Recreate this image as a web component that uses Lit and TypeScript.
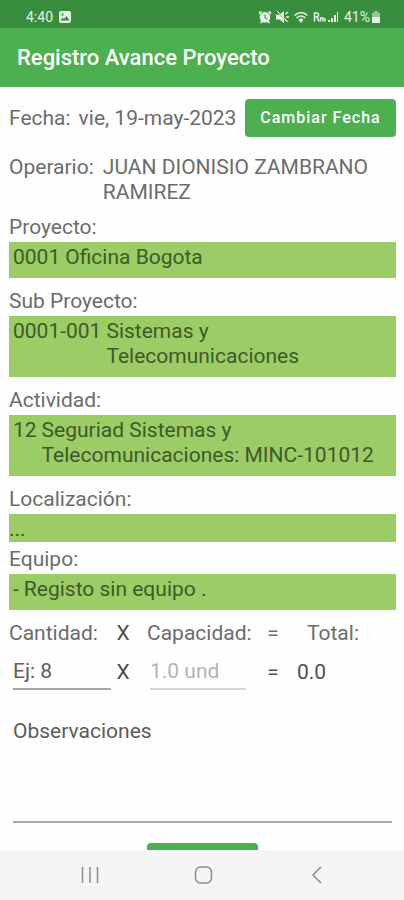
import { LitElement, html, css, svg } from "lit";
import { customElement, property } from "lit/decorators.js";

@customElement("status-bar")
class StatusBar extends LitElement {
  static styles = css`
    :host {
      display: flex;
      align-items: center;
      justify-content: space-between;
      height: 28px;
      padding: 6px 24px 0 26px;
      box-sizing: border-box;
      background: #388e3c;
      color: #e6f3e4;
      font: 14px/20px Roboto, sans-serif;
    }
    .group {
      display: flex;
      align-items: center;
      gap: 5px;
    }
    .tight {
      gap: 2px;
    }
    svg {
      display: block;
      fill: currentColor;
    }
    .line {
      fill: none;
      stroke: currentColor;
    }
  `;

  render() {
    return html`
      <div class="group">
        <span>4:40</span>
        <svg width="14" height="14" viewBox="0 0 14 14">
          <path fill-rule="evenodd" d="M3 1h8a2 2 0 0 1 2 2v8a2 2 0 0 1-2 2H3a2 2 0 0 1-2-2V3a2 2 0 0 1 2-2zM2.500 10.500h9L8.500 6 6 9 4.500 7.500zM3.500 3.500v2h2v-2z" />
        </svg>
      </div>
      <div class="group">
        <svg width="12" height="14" viewBox="0 0 12 14">
          <path fill-rule="evenodd" d="M6 2a5 5 0 1 1 0 10.500A5 5 0 0 1 6 2zM5.500 4.500v3.500l2.500 1.500.5-1-2-1v-3z" />
          <path d="M0 5V1.500h3.500zM12 5V1.500H8.500zM1 13.500l1-3 2 2zM11 13.500l-1-3-2 2z" />
        </svg>
        <svg width="13" height="14" viewBox="0 0 13 14">
          <path d="M0 4.500h3.500L8 1v12L3.500 9.500H0z" />
          <path d="M0 1l12 11" stroke="#388e3c" stroke-width="1" />
          <path class="line" d="M1 1l11 11" />
          <path class="line" stroke-width="1.500" d="M9.500 4l2.500-2M10 7h3M9.500 10l1 1" />
        </svg>
        <svg width="14" height="14" viewBox="0 0 14 14">
          <path class="line" stroke-width="1.500" d="M.5 5.500q6.500-6 13 0M2.500 8q4.500-4 9 0" />
          <path d="M7 13L4.500 9.500q2.500-2 5 0z" />
        </svg>
        <div class="group tight">
          <svg width="13" height="14" viewBox="0 0 13 14">
            <path class="line" stroke-width="1.500" d="M1.500 2.500v9M1.500 3h2q2 0 2 2t-2 2h-2M4 7l2 4.500M7.500 11.500V8h2.500v3.500M12 8v3.500" />
          </svg>
          <svg width="11" height="14" viewBox="0 0 11 14">
            <path d="M0 10h2v2H0zM3 8h2v4H3zM6 5h2v7H6zM9 2h1v10H9z" />
          </svg>
        </div>
        <div class="group tight">
          <span>41%</span>
          <svg width="8" height="14" viewBox="0 0 8 14">
            <path d="M2.500 1h3v1.500H7a1 1 0 0 1 1 1V12a1 1 0 0 1-1 1H1a1 1 0 0 1-1-1V3.500a1 1 0 0 1 1-1h1.500z" opacity=".55" />
            <path d="M0 7h8v5a1 1 0 0 1-1 1H1a1 1 0 0 1-1-1z" />
          </svg>
        </div>
      </div>
    `;
  }
}

@customElement("picker-field")
class PickerField extends LitElement {
  @property() label = "";
  @property() code = "";
  @property() value = "";

  static styles = css`
    :host {
      display: block;
      font: 21px/25px Roboto, sans-serif;
      color: #6c6c6c;
    }
    .label {
      margin-bottom: 2px;
    }
    .box {
      display: flex;
      gap: 5px;
      width: 100%;
      box-sizing: border-box;
      padding: 3px 4px 8px;
      border: 0;
      background: #9ccc65;
      color: #40592a;
      font: inherit;
      text-align: left;
    }
    .code {
      white-space: nowrap;
    }
    .empty {
      padding: 3px 0 0;
    }
  `;

  render() {
    return html`
      <div class="label" id="label">${this.label}</div>
      <button class="box ${this.code ? "" : "empty"}" type="button" aria-labelledby="label value">
        ${this.code ? html`<span class="code">${this.code}</span>` : null}
        <span id="value">${this.value}</span>
      </button>
    `;
  }
}

@customElement("nav-bar")
class NavBar extends LitElement {
  static styles = css`
    :host {
      display: flex;
      justify-content: center;
      align-items: center;
      gap: 88px;
      height: 50px;
      flex: none;
      padding-left: 3px;
      background: #f5f5f5;
    }
    button {
      display: flex;
      padding: 0;
      border: 0;
      background: none;
      color: #8c8c8c;
    }
    svg {
      fill: none;
      stroke: currentColor;
      stroke-width: 1.500;
    }
  `;

  private key(name: string, shape: unknown) {
    return html`<button type="button" aria-label=${name}>
      <svg width="25" height="20" viewBox="0 0 25 20">${shape}</svg>
    </button>`;
  }

  render() {
    return html`
      ${this.key("Recientes", svg`<path d="M4.500 2v16M12 2v16M19.500 2v16" />`)}
      ${this.key("Inicio", svg`<rect x="4.500" y="2" width="16" height="16" rx="5" />`)}
      ${this.key("Atrás", svg`<path d="M17 2L9 10l8 8" />`)}
    `;
  }
}

@customElement("app-root")
class AppRoot extends LitElement {
  static styles = css`
    :host {
      display: flex;
      flex-direction: column;
      height: 100vh;
      background: #fefefe;
      color: #6c6c6c;
      font: 21px/25px Roboto, sans-serif;
    }
    .bar {
      flex: none;
      padding: 17px;
      background: #4caf50;
      color: #fff;
    }
    .title {
      margin: 0;
      font-size: 22px;
      line-height: 25px;
      font-weight: 500;
    }
    .content {
      flex: 1;
      min-height: 0;
      overflow: hidden;
      padding: 12px 8px 0 9px;
    }
    .date,
    .worker {
      display: flex;
      gap: 9px;
    }
    .date {
      align-items: center;
      margin-bottom: 18px;
      white-space: nowrap;
    }
    .worker {
      margin-bottom: 10px;
    }
    .action {
      border: 0;
      border-radius: 4px;
      background: #4caf50;
      color: #fff;
      height: 38px;
      font: 500 16px/20px Roboto, sans-serif;
      letter-spacing: 1px;
    }
    .change {
      flex: none;
      width: 151px;
      padding: 0;
      margin-left: auto;
    }
    .date {
      gap: 8px;
    }
    .fields {
      display: flex;
      flex-direction: column;
      gap: 11px;
    }
    .near {
      margin-top: -6px;
    }
    .amounts {
      display: grid;
      grid-template-columns: 104fr 20fr 124fr 32fr 107fr;
      align-items: center;
      row-gap: 8px;
      margin-top: 11px;
    }
    .sign {
      text-align: center;
    }
    .dark {
      color: #4e4e4e;
    }
    .capacity {
      padding-left: 14px;
    }
    .total {
      padding-left: 18px;
    }
    .result {
      padding-left: 8px;
    }
    input,
    textarea {
      display: block;
      box-sizing: border-box;
      border: 0;
      border-bottom: 2px solid #a8a8a8;
      border-radius: 0;
      padding: 0;
      background: none;
      color: #4e4e4e;
      font: inherit;
      outline: 0;
    }
    input {
      height: 36px;
      min-width: 0;
      margin: 0 2px 0 4px;
    }
    .capacity-input {
      margin: 0 11px 0 17px;
      border-color: #d4d4d4;
    }
    ::placeholder {
      color: #5c5c5c;
      opacity: 1;
    }
    .capacity-input::placeholder {
      color: #b4b4b4;
    }
    .notes {
      width: calc(100% - 8px);
      height: 104px;
      margin: 29px 4px 20px;
      resize: none;
    }
    .save {
      display: block;
      width: 111px;
      margin: 0 auto;
    }
  `;

  render() {
    return html`
      <status-bar></status-bar>
      <header class="bar"><h1 class="title">Registro Avance Proyecto</h1></header>
      <main class="content">
        <div class="date">
          <span>Fecha:</span>
          <span>vie, 19-may-2023</span>
          <button class="action change" type="button">Cambiar Fecha</button>
        </div>
        <div class="worker">
          <span>Operario:</span>
          <span>JUAN DIONISIO ZAMBRANO RAMIREZ</span>
        </div>
        <div class="fields">
          <picker-field label="Proyecto:" code="0001" value="Oficina Bogota"></picker-field>
          <picker-field label="Sub Proyecto:" code="0001-001" value="Sistemas y Telecomunicaciones"></picker-field>
          <picker-field label="Actividad:" code="12" value="Seguriad Sistemas y Telecomunicaciones: MINC-101012"></picker-field>
          <picker-field label="Localización:" value="..."></picker-field>
          <picker-field class="near" label="Equipo:" code="-" value="Registo sin equipo ."></picker-field>
        </div>
        <div class="amounts">
          <label for="quantity">Cantidad:</label>
          <span class="sign dark">X</span>
          <label class="capacity" for="capacity">Capacidad:</label>
          <span class="sign">=</span>
          <label class="total" for="total">Total:</label>
          <input id="quantity" inputmode="decimal" placeholder="Ej: 8" />
          <span class="sign dark">X</span>
          <input class="capacity-input" id="capacity" placeholder="1.0 und" disabled />
          <span class="sign dark">=</span>
          <output class="result dark" id="total">0.0</output>
        </div>
        <textarea class="notes" placeholder="Observaciones" aria-label="Observaciones"></textarea>
        <button class="action save" type="button" aria-label="Guardar"></button>
      </main>
      <nav-bar></nav-bar>
    `;
  }
}
